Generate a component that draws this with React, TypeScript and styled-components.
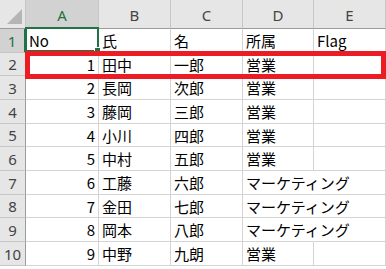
import React from "react";
import styled, { createGlobalStyle } from "styled-components";

const Global = createGlobalStyle`
  html, body { margin: 0; padding: 0; background: #ffffff; }
  body { font-family: "Noto Sans CJK JP", "Noto Sans", sans-serif; overflow: hidden; }
`;

const Sheet = styled.div`
  position: relative;
  display: grid;
  grid-template-columns: 26px 73px 72px 72px 71px 72px;
  grid-template-rows: 29px 24px 23px 24px 24px 23px 24px 24px 23px 24px 24px;
  width: 386px;
  height: 269px;
  overflow: hidden;
`;

const Corner = styled.div`
  background: #e6e6e6;
  border-right: 1px solid #c6c6c6;
  border-bottom: 1px solid #9b9b9b;
  box-sizing: border-box;
  display: flex;
  align-items: flex-end;
  justify-content: flex-end;
  padding: 0 3px 4px 0;
`;

const ColHead = styled.div<{ $sel?: boolean }>`
  box-sizing: border-box;
  background: ${(p) => (p.$sel ? "#d2d2d2" : "#e6e6e6")};
  border-right: 1px solid #c6c6c6;
  border-bottom: ${(p) => (p.$sel ? "2px solid #217346" : "1px solid #9b9b9b")};
  color: ${(p) => (p.$sel ? "#217346" : "#444444")};
  font-family: "Noto Sans", sans-serif;
  font-size: 15px;
  display: flex;
  align-items: center;
  justify-content: center;
  padding-top: ${(p) => (p.$sel ? "2px" : "1px")};
`;

const RowHead = styled.div<{ $sel?: boolean }>`
  box-sizing: border-box;
  background: ${(p) => (p.$sel ? "#d2d2d2" : "#e6e6e6")};
  border-right: ${(p) => (p.$sel ? "2px solid #217346" : "1px solid #9b9b9b")};
  border-bottom: 1px solid #c6c6c6;
  color: ${(p) => (p.$sel ? "#217346" : "#444444")};
  font-family: "Noto Sans", sans-serif;
  font-size: 15px;
  display: flex;
  align-items: center;
  justify-content: center;
`;

const Cell = styled.div<{ $num?: boolean }>`
  box-sizing: border-box;
  border-right: 1px solid #d4d4d4;
  border-bottom: 1px solid #d4d4d4;
  color: #000000;
  font-size: 15px;
  display: flex;
  align-items: center;
  justify-content: ${(p) => (p.$num ? "flex-end" : "flex-start")};
  padding: 0 3px;
  white-space: nowrap;
  overflow: visible;
  position: relative;
`;

const NoBorderCell = styled(Cell)`
  border-right: 1px solid transparent;
`;

const ActiveCell = styled.div`
  position: absolute;
  left: 25px;
  top: 27px;
  width: 74px;
  height: 25px;
  box-sizing: border-box;
  border: 2px solid #217346;
  pointer-events: none;
`;

const Handle = styled.div`
  position: absolute;
  right: -4px;
  bottom: -4px;
  width: 5px;
  height: 5px;
  background: #217346;
  border: 1px solid #ffffff;
`;

const Highlight = styled.div`
  position: absolute;
  left: 25px;
  top: 51px;
  width: 361px;
  height: 28px;
  box-sizing: border-box;
  border: 5px solid #ec1c24;
  pointer-events: none;
`;

type Row = { no: string; sei: string; mei: string; dept: string; flag: string };

const rows: Row[] = [
  { no: "No", sei: "氏", mei: "名", dept: "所属", flag: "Flag" },
  { no: "1", sei: "田中", mei: "一郎", dept: "営業", flag: "" },
  { no: "2", sei: "長岡", mei: "次郎", dept: "営業", flag: "" },
  { no: "3", sei: "藤岡", mei: "三郎", dept: "営業", flag: "" },
  { no: "4", sei: "小川", mei: "四郎", dept: "営業", flag: "" },
  { no: "5", sei: "中村", mei: "五郎", dept: "営業", flag: "" },
  { no: "6", sei: "工藤", mei: "六郎", dept: "マーケティング", flag: "" },
  { no: "7", sei: "金田", mei: "七郎", dept: "マーケティング", flag: "" },
  { no: "8", sei: "岡本", mei: "八郎", dept: "マーケティング", flag: "" },
  { no: "9", sei: "中野", mei: "九朗", dept: "営業", flag: "" },
];

const cols = ["A", "B", "C", "D", "E"];

export default function App() {
  return (
    <>
      <Global />
      <Sheet>
        <Corner>
          <svg width="15" height="15" viewBox="0 0 15 15">
            <polygon points="15,0 15,15 0,15" fill="#b5b5b5" />
          </svg>
        </Corner>
        {cols.map((c) => (
          <ColHead key={c} $sel={c === "A"}>
            {c}
          </ColHead>
        ))}
        {rows.map((r, i) => {
          const long = r.dept.length > 2;
          const DeptCell = long ? NoBorderCell : Cell;
          return (
            <React.Fragment key={i}>
              <RowHead $sel={i === 0}>{i + 1}</RowHead>
              <Cell $num={i > 0}>{r.no}</Cell>
              <Cell>{r.sei}</Cell>
              <Cell>{r.mei}</Cell>
              <DeptCell>{r.dept}</DeptCell>
              <Cell>{r.flag}</Cell>
            </React.Fragment>
          );
        })}
        <ActiveCell>
          <Handle />
        </ActiveCell>
        <Highlight />
      </Sheet>
    </>
  );
}
